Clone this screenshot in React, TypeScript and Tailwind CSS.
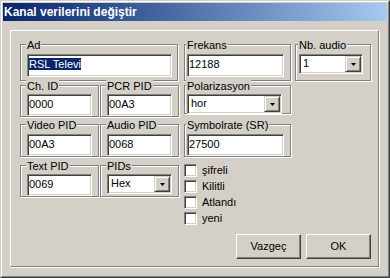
import type { ReactNode } from 'react';

const sunken =
  'bg-white border border-t-[#808080] border-l-[#808080] border-b-white border-r-white shadow-[inset_1px_1px_0_#404040,inset_-1px_-1px_0_#d4d0c8]';

const pushButton =
  'flex items-center justify-center w-[65px] h-[25px] bg-[#d4d0c8] border border-t-white border-l-white border-b-[#404040] border-r-[#404040] shadow-[inset_-1px_-1px_0_#808080]';

interface GroupProps {
  label: string;
  className: string;
  labelClass?: string;
  children: ReactNode;
}

function Group({ label, className, labelClass = 'left-[5px]', children }: GroupProps) {
  return (
    <div
      className={`relative shrink-0 border border-[#808080] shadow-[inset_1px_1px_0_#fff,1px_1px_0_#fff] ${className}`}
    >
      <span
        className={`absolute top-[-6px] ${labelClass} bg-[#d4d0c8] px-px leading-[13px] whitespace-nowrap`}
      >
        {label}
      </span>
      {children}
    </div>
  );
}

function Edit({ children, className }: { children: ReactNode; className: string }) {
  return (
    <div className={`${sunken} pl-px pt-[3px] leading-[13px] whitespace-nowrap overflow-hidden ${className}`}>
      {children}
    </div>
  );
}

function Combo({ value, className }: { value: string; className: string }) {
  return (
    <div className={`${sunken} flex h-[20px] ${className}`}>
      <div className="flex-1 pl-[3px] pt-[2px] leading-[13px]">{value}</div>
      <div className="m-px flex w-[16px] items-center justify-center bg-[#d4d0c8] border border-t-[#d4d0c8] border-l-[#d4d0c8] border-b-[#404040] border-r-[#404040] shadow-[inset_1px_1px_0_#fff,inset_-1px_-1px_0_#808080]">
        <svg width="5" height="3" viewBox="0 0 5 3" className="mt-px">
          <polygon points="0,0 5,0 2.5,3" fill="#000" />
        </svg>
      </div>
    </div>
  );
}

function Check({ label }: { label: string }) {
  return (
    <div className="flex h-[16px] items-start">
      <div className={`${sunken} size-[13px] shrink-0`} />
      <span className="ml-[5px] leading-[13px]">{label}</span>
    </div>
  );
}

export default function App() {
  return (
    <div className="w-[390px] h-[278px] bg-[#d4d0c8] border border-t-[#d4d0c8] border-l-[#d4d0c8] border-b-[#404040] border-r-[#404040] font-['Liberation_Sans',Arial,sans-serif] text-[11px] text-black">
      <div className="flex h-full flex-col border border-t-white border-l-white border-b-[#808080] border-r-[#808080] p-px">
        {/* title bar */}
        <div className="flex h-[18px] shrink-0 items-center bg-gradient-to-r from-[#0a246a] to-[#a6caf0] pl-px">
          <span className="text-[12px] font-bold leading-none text-white">Kanal verilerini değiştir</span>
        </div>

        <div className="ml-[7px] mt-[9px] h-[237px] w-[369px] border border-t-white border-l-white border-b-[#808080] border-r-[#808080] shadow-[1px_1px_0_#fff] pl-[9px] pt-[13px]">
          {/* row 1 */}
          <div className="flex items-start">
            <Group label="Ad" className="w-[158px] h-[37px] pl-[6px] pt-[9px]">
              <Edit className="w-[145px] h-[23px]">
                <span className="bg-[#0a246a] text-white">RSL Televi</span>
              </Edit>
            </Group>
            <Group label="Frekans" labelClass="left-px" className="ml-[6px] w-[107px] h-[37px] pl-[2px] pt-[9px]">
              <Edit className="w-[97px] h-[23px]">12188</Edit>
            </Group>
            <Group label="Nb. audio" labelClass="left-[2px]" className="ml-[4px] w-[76px] h-[37px] pl-[3px] pt-[9px]">
              <Combo value="1" className="w-[64px]" />
            </Group>
          </div>

          {/* row 2 */}
          <div className="mt-[4px] flex items-start">
            <Group label="Ch. ID" className="w-[79px] h-[32px] pl-[6px] pt-[8px]">
              <Edit className="w-[65px] h-[22px]">0000</Edit>
            </Group>
            <Group label="PCR PID" className="ml-px w-[79px] h-[32px] pl-[6px] pt-[8px]">
              <Edit className="w-[65px] h-[22px]">00A3</Edit>
            </Group>
            <Group label="Polarizasyon" labelClass="left-px" className="ml-[5px] w-[107px] h-[29px] pl-[2px] pt-[8px]">
              <Combo value="hor" className="w-[95px]" />
            </Group>
          </div>

          {/* row 3 */}
          <div className="mt-[7px] flex items-start">
            <Group label="Video PID" className="w-[79px] h-[33px] pl-[6px] pt-[9px]">
              <Edit className="w-[65px] h-[22px]">00A3</Edit>
            </Group>
            <Group label="Audio PID" className="ml-px w-[79px] h-[33px] pl-[6px] pt-[9px]">
              <Edit className="w-[65px] h-[22px]">0068</Edit>
            </Group>
            <Group label="Symbolrate (SR)" labelClass="left-px" className="ml-[5px] w-[107px] h-[33px] pl-[2px] pt-[9px]">
              <Edit className="w-[97px] h-[22px]">27500</Edit>
            </Group>
          </div>

          {/* row 4 */}
          <div className="mt-[7px] flex items-start">
            <Group label="Text PID" className="mt-px w-[79px] h-[32px] pl-[6px] pt-[8px]">
              <Edit className="w-[65px] h-[22px]">0069</Edit>
            </Group>
            <Group label="PIDs" className="mt-px ml-px w-[79px] h-[32px] pl-[6px] pt-[8px]">
              <Combo value="Hex" className="w-[65px]" />
            </Group>
            <div className="ml-[5px] flex flex-col">
              <Check label="şifreli" />
              <Check label="Kilitli" />
              <Check label="Atlandı" />
              <Check label="yeni" />
            </div>
          </div>

          {/* buttons */}
          <div className="mt-[6px] flex justify-end gap-[5px] pr-[7px]">
            <button type="button" className={pushButton}>
              Vazgeç
            </button>
            <button type="button" className={pushButton}>
              OK
            </button>
          </div>
        </div>
      </div>
    </div>
  );
}
